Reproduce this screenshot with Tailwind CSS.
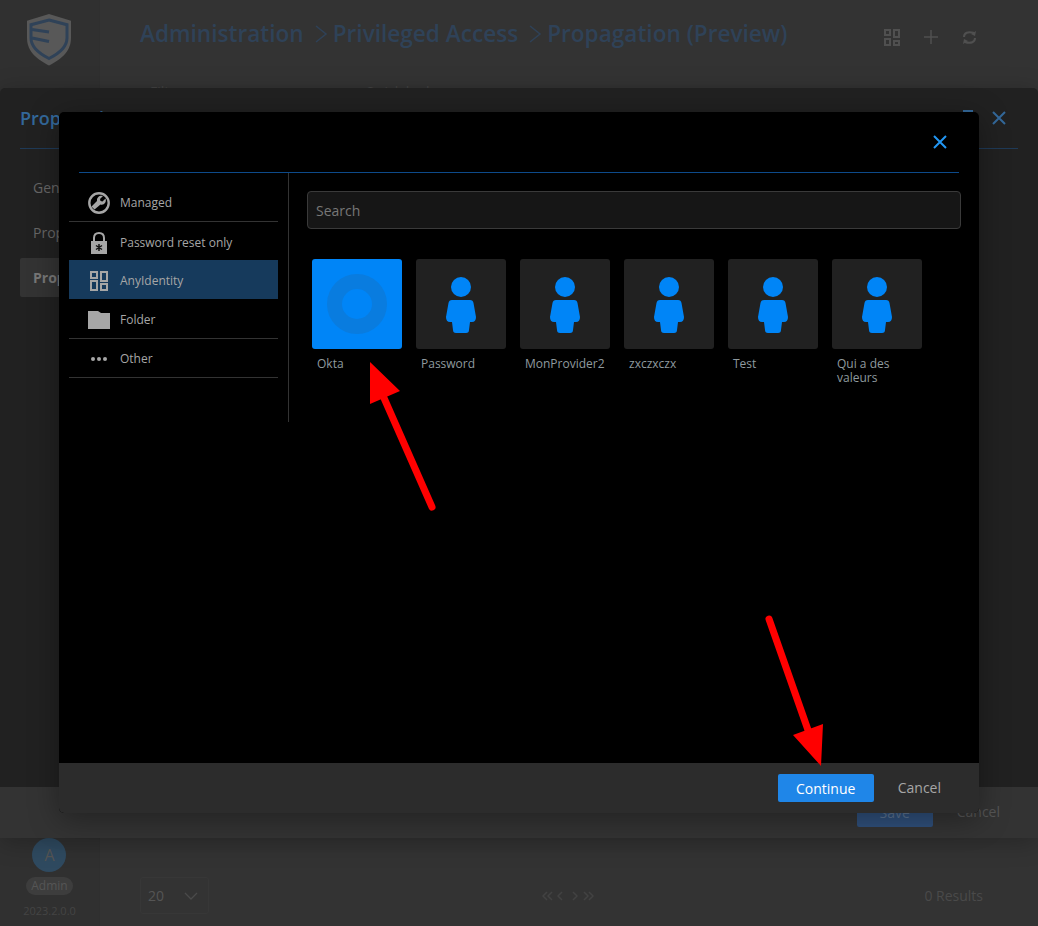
<!DOCTYPE html>
<html lang="en">

<head>
  <meta charset="UTF-8">
  <meta name="viewport" content="width=device-width, initial-scale=1.0">
  <title>Propagation</title>
  <script src="https://cdn.jsdelivr.net/npm/@tailwindcss/browser@4"></script>
</head>

<body class="bg-[#333333]">
  <div class="relative w-[1038px] h-[926px] overflow-hidden bg-[#333333] font-['Open_Sans',sans-serif]">

    <!-- page behind the dialogs -->
    <div class="flex h-full">
      <div class="w-[100px] shrink-0 h-full flex flex-col items-center justify-between bg-[#303030] border-r border-[#2f2f2f] pt-[14px] pb-[8px]">
        <svg width="46" height="54" viewBox="0 0 46 54" class="mr-[1px]">
          <path d="M23 0 L45 6.700 V24 C45 38 34 46 23 51.500 C12 46 1 38 1 24 V6.700 Z" fill="#585858" />
          <path d="M23 6 L41 10.700 V24 C41 34 31 40.500 23 44.500 C15 40.500 5 34 5 24 V10.700 Z" fill="none" stroke="#2f4258" stroke-width="3" />
          <path d="M6 15.500 L23 18 M6 24 L23 27.500" fill="none" stroke="#2f4258" stroke-width="3.200" />
        </svg>
        <div class="flex flex-col items-center">
          <div class="w-[34px] h-[34px] rounded-full bg-[#2f4a60] flex items-center justify-center text-[#555555] text-[16px]">A</div>
          <div class="mt-[5px] px-[5px] h-[18px] rounded-full bg-[#3d3d3d] text-[#555555] text-[12px] leading-[18px]">Admin</div>
          <div class="mt-[8px] text-[11px] leading-[15px] text-[#444444]">2023.2.0.0</div>
        </div>
      </div>

      <div class="flex-1 flex flex-col justify-between pl-[40px] pr-[55px] pt-[15px] pb-[12px]">
        <div>
          <div class="flex items-center justify-between mr-[6px]">
            <div class="flex items-center text-[22.600px] leading-[38px] font-semibold text-[#2f4258] whitespace-nowrap">
              <span>Administration</span>
              <svg width="14" height="20" viewBox="0 0 14 20" class="ml-[10px] mr-[5px]"><path d="M2 2 L12 10 L2 18" fill="none" stroke="#2f4258" stroke-width="1.500" /></svg>
              <span>Privileged Access</span>
              <svg width="14" height="20" viewBox="0 0 14 20" class="ml-[10px] mr-[5px]"><path d="M2 2 L12 10 L2 18" fill="none" stroke="#2f4258" stroke-width="1.500" /></svg>
              <span>Propagation (Preview)</span>
            </div>
            <div class="flex items-center gap-[23px] mt-[6px]">
              <svg width="16" height="17" viewBox="0 0 16 17" fill="none" stroke="#505050" stroke-width="2"><rect x="1" y="1" width="5" height="5" /><rect x="10" y="1" width="5" height="7" /><rect x="1" y="10" width="5" height="6" /><rect x="10" y="12" width="5" height="4" /></svg>
              <svg width="16" height="16" viewBox="0 0 16 16" stroke="#505050" stroke-width="1.500"><path d="M8 1 V15 M1 8 H15" /></svg>
              <svg width="15" height="15" viewBox="0 0 15 15" fill="none" stroke="#505050" stroke-width="2"><path d="M2 7 C2 3 6 1 12 3 M13 8 C13 12 9 14 3 12" /><path d="M14 1 L13 6 L9 4 Z M1 14 L2 9 L6 11 Z" fill="#505050" stroke="none" /></svg>
            </div>
          </div>
          <div class="flex mt-[30px] pl-[10px] text-[14px] leading-[18px] text-[#444444]">
            <span class="w-[215px]">Filter</span>
            <span>Quick lookup</span>
          </div>
        </div>

        <div class="flex items-center justify-between">
          <div class="w-[69px] h-[37px] flex items-center justify-between pl-[7px] pr-[10px] rounded-[3px] border border-[#373737] text-[14px] text-[#555555]">
            <span>20</span>
            <svg width="14" height="8" viewBox="0 0 14 8" fill="none" stroke="#4a4a4a" stroke-width="1.300"><path d="M1 1 L7 7 L13 1" /></svg>
          </div>
          <svg width="53" height="10" viewBox="0 0 53 10" fill="none" stroke="#424242" stroke-width="1.500" class="ml-[4px]"><path d="M5 1 L1 5 L5 9 M10 1 L6 5 L10 9 M20 1 L16 5 L20 9 M31 1 L35 5 L31 9 M42 1 L46 5 L42 9 M47 1 L51 5 L47 9" /></svg>
          <span class="text-[14px] text-[#4a4a4a]">0 Results</span>
        </div>
      </div>
    </div>

    <!-- first dialog -->
    <div class="absolute left-0 top-[88px] w-[1038px] h-[750px] rounded-[5px] bg-[#212121] flex flex-col shadow-[0_4px_24px_rgba(0,0,0,0.25)]">
      <div class="flex-1 px-[20px]">
        <div class="h-[61px] flex items-center justify-between border-b border-[#1f3a57] pt-[1px]">
          <span class="text-[18px] font-semibold text-[#33689a]">Propagation on Secret</span>
          <div class="flex items-center gap-[18px] pr-[11px] relative">
            <span class="w-[10px] h-[2px] mb-[16px] bg-[#33689a]"></span>
            <svg width="16" height="16" viewBox="0 0 16 16" stroke="#33689a" stroke-width="2" class="mb-[2px]"><path d="M2 2 L14 14 M14 2 L2 14" /></svg>
          </div>
        </div>
        <div class="mt-[19px] flex flex-col gap-[6px] w-[100px] text-[14px] text-[#666666]">
          <div class="h-[39px] pl-[13px] leading-[39px]">General</div>
          <div class="h-[39px] pl-[13px] leading-[39px]">Properties</div>
          <div class="h-[39px] pl-[13px] leading-[39px] font-bold bg-[#333333] text-[#777777] rounded-[2px]">Properties</div>
        </div>
      </div>
      <div class="h-[51px] bg-[#333333] flex items-center justify-end gap-[24px] pr-[38px] text-[14px] shrink-0">
        <div class="w-[76px] h-[28px] text-center leading-[28px] rounded-[2px] bg-[#2f4f7a] text-[#5c7390]">Save</div>
        <div class="text-[#555555] mt-[-2px]">Cancel</div>
      </div>
    </div>

    <!-- second dialog -->
    <div class="absolute left-[59px] top-[112px] w-[920px] h-[701px] rounded-[5px] bg-black flex flex-col overflow-hidden shadow-[0_6px_30px_rgba(0,0,0,0.35)]">
      <div class="flex-1 flex flex-col">
        <div class="mx-[20px] h-[61px] shrink-0 border-b border-[#0d4a8a] flex items-center justify-end pr-[11px]">
          <svg width="16" height="16" viewBox="0 0 16 16" stroke="#2296f3" stroke-width="2"><path d="M2 2 L14 14 M14 2 L2 14" /></svg>
        </div>

        <div class="flex">
          <!-- categories -->
          <div class="w-[230px] h-[249px] shrink-0 border-r border-[#333333] pl-[10px] pr-[10px] pt-[10px] text-[12px] text-[#a6a6a6]">
            <div class="h-[39px] pt-[2px] flex items-center border-b border-[#333333]">
              <div class="w-[51px] pl-[19px] shrink-0">
                <svg width="22" height="22" viewBox="0 0 22 22" class="block">
                  <circle cx="11" cy="11" r="9.700" fill="none" stroke="#a6a6a6" stroke-width="2.400" />
                  <path d="M17.500 6.500 L14.500 9.500 L12.500 9 L12 7 L15 4 C12 3 8.500 5 9 9 L3.500 14.500 L6.500 17.500 L12.500 12.500 C16 13.500 19 10 17.500 6.500 Z" fill="#a6a6a6" />
                </svg>
              </div>
              <span>Managed</span>
            </div>
            <div class="h-[39px] pt-[2px] flex items-center">
              <div class="w-[51px] pl-[19px] shrink-0">
                <svg width="22" height="24" viewBox="0 0 22 24" class="block">
                  <path d="M6 11 V7 C6 4 8 2 11 2 C14 2 16 4 16 7 V11" fill="none" stroke="#a6a6a6" stroke-width="2" />
                  <rect x="3" y="10" width="16" height="13" fill="#a6a6a6" />
                  <path d="M11 13 V20 M8 14.500 L14 18.500 M14 14.500 L8 18.500" stroke="#111111" stroke-width="1.500" />
                </svg>
              </div>
              <span>Password reset only</span>
            </div>
            <div class="h-[39px] pt-[2px] flex items-center bg-[#163a5c] mt-[-1px] mb-[1px]">
              <div class="w-[51px] pl-[19px] shrink-0">
                <svg width="22" height="22" viewBox="0 0 22 22" fill="none" stroke="#a6a6a6" stroke-width="2" class="block">
                  <rect x="3" y="2" width="6" height="6" /><rect x="13" y="2" width="6" height="9" /><rect x="3" y="11" width="6" height="9" /><rect x="13" y="14" width="6" height="6" />
                </svg>
              </div>
              <span>AnyIdentity</span>
            </div>
            <div class="h-[39px] pt-[2px] flex items-center border-b border-[#333333]">
              <div class="w-[51px] pl-[19px] shrink-0">
                <svg width="22" height="18" viewBox="0 0 22 18" class="block"><path d="M0 0 H10 L13 2 H22 V18 H0 Z" fill="#a6a6a6" /></svg>
              </div>
              <span>Folder</span>
            </div>
            <div class="h-[39px] pt-[2px] flex items-center border-b border-[#333333]">
              <div class="w-[51px] pl-[19px] shrink-0">
                <svg width="22" height="6" viewBox="0 0 22 6" fill="#a6a6a6" class="block"><circle cx="5" cy="3" r="2" /><circle cx="11" cy="3" r="2" /><circle cx="17" cy="3" r="2" /></svg>
              </div>
              <span>Other</span>
            </div>
          </div>

          <!-- search and tiles -->
          <div class="flex-1 pl-[18px] pr-[18px] pt-[18px]">
            <div class="h-[38px] rounded-[4px] border border-[#3a3a3a] bg-[#161616] pl-[8px] text-[14px] leading-[38px] text-[#777777]">Search</div>
            <div class="flex gap-[14px] mt-[30px] pl-[5px]">
              <div class="w-[90px] text-[12px] leading-[14px] text-[#8f9a9f]">
                <div class="w-[90px] h-[90px] rounded-[3px] bg-[#0085f7] flex items-center justify-center">
                  <svg width="60" height="60" viewBox="0 0 60 60"><circle cx="30" cy="30" r="22.500" fill="none" stroke="#097cdf" stroke-width="15" /></svg>
                </div>
                <div class="mt-[8px] px-[5px]">Okta</div>
              </div>
              <div class="w-[90px] text-[12px] leading-[14px] text-[#8f9a9f]">
                <div class="w-[90px] h-[90px] rounded-[3px] bg-[#212121]">
                  <svg width="90" height="90" viewBox="0 0 90 90" fill="#0085f7"><circle cx="45" cy="28" r="10" /><path d="M36 41 H54 Q57 41 57.500 44 L60 58 Q60 63 56 63 H54 L53 71 Q53 74 50 74 H40 Q37 74 37 71 L36 63 H34 Q30 63 30 58 L32.500 44 Q33 41 36 41 Z" /></svg>
                </div>
                <div class="mt-[8px] px-[5px]">Password</div>
              </div>
              <div class="w-[90px] text-[12px] leading-[14px] text-[#8f9a9f]">
                <div class="w-[90px] h-[90px] rounded-[3px] bg-[#212121]">
                  <svg width="90" height="90" viewBox="0 0 90 90" fill="#0085f7"><circle cx="45" cy="28" r="10" /><path d="M36 41 H54 Q57 41 57.500 44 L60 58 Q60 63 56 63 H54 L53 71 Q53 74 50 74 H40 Q37 74 37 71 L36 63 H34 Q30 63 30 58 L32.500 44 Q33 41 36 41 Z" /></svg>
                </div>
                <div class="mt-[8px] px-[5px] whitespace-nowrap">MonProvider2</div>
              </div>
              <div class="w-[90px] text-[12px] leading-[14px] text-[#8f9a9f]">
                <div class="w-[90px] h-[90px] rounded-[3px] bg-[#212121]">
                  <svg width="90" height="90" viewBox="0 0 90 90" fill="#0085f7"><circle cx="45" cy="28" r="10" /><path d="M36 41 H54 Q57 41 57.500 44 L60 58 Q60 63 56 63 H54 L53 71 Q53 74 50 74 H40 Q37 74 37 71 L36 63 H34 Q30 63 30 58 L32.500 44 Q33 41 36 41 Z" /></svg>
                </div>
                <div class="mt-[8px] px-[5px]">zxczxczx</div>
              </div>
              <div class="w-[90px] text-[12px] leading-[14px] text-[#8f9a9f]">
                <div class="w-[90px] h-[90px] rounded-[3px] bg-[#212121]">
                  <svg width="90" height="90" viewBox="0 0 90 90" fill="#0085f7"><circle cx="45" cy="28" r="10" /><path d="M36 41 H54 Q57 41 57.500 44 L60 58 Q60 63 56 63 H54 L53 71 Q53 74 50 74 H40 Q37 74 37 71 L36 63 H34 Q30 63 30 58 L32.500 44 Q33 41 36 41 Z" /></svg>
                </div>
                <div class="mt-[8px] px-[5px]">Test</div>
              </div>
              <div class="w-[90px] text-[12px] leading-[14px] text-[#8f9a9f]">
                <div class="w-[90px] h-[90px] rounded-[3px] bg-[#212121]">
                  <svg width="90" height="90" viewBox="0 0 90 90" fill="#0085f7"><circle cx="45" cy="28" r="10" /><path d="M36 41 H54 Q57 41 57.500 44 L60 58 Q60 63 56 63 H54 L53 71 Q53 74 50 74 H40 Q37 74 37 71 L36 63 H34 Q30 63 30 58 L32.500 44 Q33 41 36 41 Z" /></svg>
                </div>
                <div class="mt-[8px] px-[5px]">Qui a des<br>valeurs</div>
              </div>
            </div>
          </div>
        </div>
      </div>

      <div class="h-[50px] shrink-0 bg-[#2c2c2c] flex items-center justify-end gap-[24px] pr-[38px] text-[14px]">
        <div class="w-[96px] h-[28px] rounded-[2px] bg-[#1f86e8] text-white text-center leading-[30px]">Continue</div>
        <div class="text-[#a6a6a6] mt-[-2px]">Cancel</div>
      </div>
    </div>

    <!-- red annotation arrows -->
    <svg class="absolute left-0 top-0" width="1038" height="926" viewBox="0 0 1038 926">
      <path d="M432 507 L384 398 M769 619 L808 730" stroke="#ff0000" stroke-width="7" stroke-linecap="round" fill="none" />
      <path d="M370 362 L400 391 L370 404 Z M793 735 L823 724 L821 766 Z" fill="#ff0000" />
    </svg>
  </div>
</body>

</html>
